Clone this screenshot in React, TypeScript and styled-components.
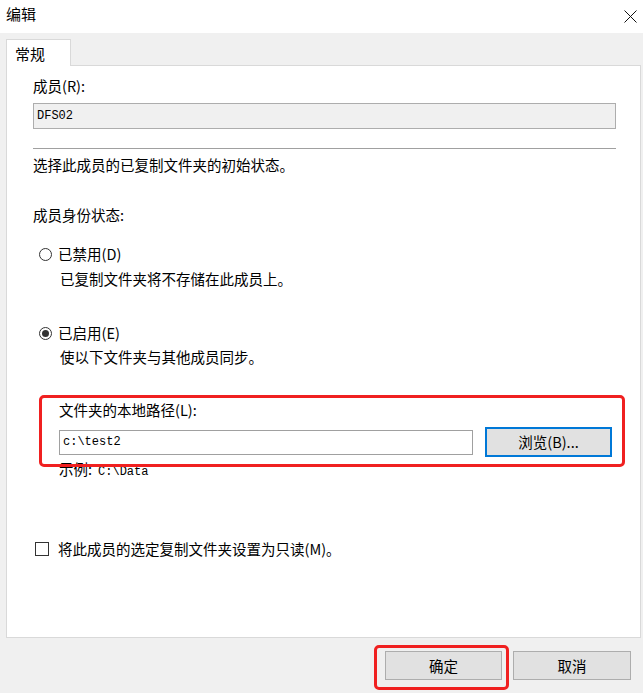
import React from "react";
import styled, { createGlobalStyle } from "styled-components";

const Global = createGlobalStyle`
  html, body { margin: 0; padding: 0; }
  body {
    background: #f0f0f0;
    font-family: "Noto Sans CJK SC", "Liberation Sans", sans-serif;
    color: #000;
  }
`;

const Window = styled.div`
  width: 643px;
  height: 693px;
  display: flex;
  flex-direction: column;
  background: #f0f0f0;
  overflow: hidden;
`;

const TitleBar = styled.div`
  height: 33px;
  flex: none;
  background: #fff;
  display: flex;
  align-items: center;
  justify-content: space-between;
  padding: 0 6px 6px 6px;
  box-sizing: border-box;
`;

const Title = styled.span`
  font-size: 15px;
  line-height: 20px;
`;

const Body = styled.div`
  flex: 1;
  display: flex;
  flex-direction: column;
  padding: 7px 2px 0 6px;
  min-height: 0;
`;

const TabStrip = styled.div`
  height: 26px;
  flex: none;
  display: flex;
  align-items: flex-end;
  margin-bottom: -1px;
  position: relative;
  z-index: 1;
`;

const Tab = styled.div`
  width: 65px;
  height: 27px;
  box-sizing: border-box;
  background: #fff;
  border: 1px solid #d9d9d9;
  border-bottom: none;
  padding-left: 8px;
  font-size: 15px;
  line-height: 27px;
`;

const Panel = styled.div`
  flex: 1;
  background: #fff;
  border: 1px solid #d9d9d9;
  display: flex;
  flex-direction: column;
  padding: 10px 24px 0 26px;
  font-size: 14.5px;
  line-height: 20px;
`;

const Text = styled.div<{ $mt?: number; $indent?: number }>`
  margin-top: ${(p) => p.$mt ?? 0}px;
  padding-left: ${(p) => p.$indent ?? 0}px;
  white-space: nowrap;
`;

const Mono = styled.span`
  font-family: "Liberation Mono", monospace;
  font-size: 12px;
  margin-left: 6px;
`;

const ReadOnlyField = styled.div`
  margin-top: 7px;
  height: 26px;
  box-sizing: border-box;
  background: #f0f0f0;
  border: 1px solid #adadad;
  display: flex;
  align-items: center;
  padding-left: 3px;
  font-family: "Liberation Mono", monospace;
  font-size: 12px;
`;

const Separator = styled.div`
  margin-top: 19px;
  height: 1px;
  background: #a0a0a0;
`;

const OptionRow = styled.div<{ $mt: number }>`
  margin-top: ${(p) => p.$mt}px;
  display: flex;
  align-items: center;
  height: 20px;
  white-space: nowrap;
`;

const Radio = styled.span<{ $checked?: boolean }>`
  width: 13px;
  height: 13px;
  margin-left: 6px;
  margin-right: 6px;
  border: 1px solid #333;
  border-radius: 50%;
  box-sizing: border-box;
  display: flex;
  align-items: center;
  justify-content: center;
  &::after {
    content: "";
    display: ${(p) => (p.$checked ? "block" : "none")};
    width: 7px;
    height: 7px;
    border-radius: 50%;
    background: #333;
  }
`;

const Checkbox = styled.span`
  width: 14px;
  height: 14px;
  box-sizing: border-box;
  border: 1px solid #333;
  margin-left: 2px;
  margin-right: 9px;
`;

const Group = styled.div`
  position: relative;
  margin-top: 33px;
  padding-left: 26px;
  display: flex;
  flex-direction: column;
`;

const Highlight = styled.div<{ $l: number; $t: number; $w: number; $h: number }>`
  position: absolute;
  left: ${(p) => p.$l}px;
  top: ${(p) => p.$t}px;
  width: ${(p) => p.$w}px;
  height: ${(p) => p.$h}px;
  box-sizing: border-box;
  border: 3px solid #f02020;
  border-radius: 5px;
  pointer-events: none;
`;

const PathRow = styled.div`
  margin-top: 7px;
  display: flex;
  align-items: center;
  height: 30px;
  gap: 12px;
`;

const PathInput = styled.div`
  width: 414px;
  height: 25px;
  box-sizing: border-box;
  border: 1px solid #a0a0a0;
  background: #fff;
  display: flex;
  align-items: center;
  padding-left: 3px;
  font-family: "Liberation Mono", monospace;
  font-size: 12px;
`;

const Button = styled.div<{ $focused?: boolean; $w: number; $h: number }>`
  position: relative;
  width: ${(p) => p.$w}px;
  height: ${(p) => p.$h}px;
  box-sizing: border-box;
  background: #e1e1e1;
  border: ${(p) => (p.$focused ? "2px solid #0078d7" : "1px solid #adadad")};
  display: flex;
  align-items: center;
  justify-content: center;
  font-size: 14.5px;
  white-space: nowrap;
`;

const Footer = styled.div`
  height: 55px;
  flex: none;
  display: flex;
  justify-content: flex-end;
  align-items: flex-start;
  padding: 13px 10px 0 0;
  box-sizing: border-box;
  gap: 11px;
`;

const CloseIcon = () => (
  <svg width="13" height="13" viewBox="0 0 13 13" style={{ marginTop: 6 }}>
    <path d="M0.5 0.5 L12.5 12.5 M12.5 0.5 L0.5 12.5" stroke="#111" strokeWidth="1" />
  </svg>
);

export default function App() {
  return (
    <>
      <Global />
      <Window>
        <TitleBar>
          <Title>编辑</Title>
          <CloseIcon />
        </TitleBar>
        <Body>
          <TabStrip>
            <Tab>常规</Tab>
          </TabStrip>
          <Panel>
            <Text>成员(R):</Text>
            <ReadOnlyField>DFS02</ReadOnlyField>
            <Separator />
            <Text $mt={6}>选择此成员的已复制文件夹的初始状态。</Text>
            <Text $mt={30}>成员身份状态:</Text>
            <OptionRow $mt={19}>
              <Radio />
              已禁用(D)
            </OptionRow>
            <Text $mt={5} $indent={27}>已复制文件夹将不存储在此成员上。</Text>
            <OptionRow $mt={34}>
              <Radio $checked />
              已启用(E)
            </OptionRow>
            <Text $mt={4} $indent={27}>使以下文件夹与其他成员同步。</Text>
            <Group>
              <Text>文件夹的本地路径(L):</Text>
              <PathRow>
                <PathInput>c:\test2</PathInput>
                <Button $focused $w={127} $h={30}>浏览(B)...</Button>
              </PathRow>
              <Text $mt={2}>
                示例:<Mono>C:\Data</Mono>
              </Text>
              <Highlight $l={6} $t={-5} $w={586} $h={72} />
            </Group>
            <OptionRow $mt={57}>
              <Checkbox />
              将此成员的选定复制文件夹设置为只读(M)。
            </OptionRow>
          </Panel>
          <Footer>
            <Button $w={117} $h={29}>
              确定
              <Highlight $l={-12} $t={-7} $w={135} $h={45} />
            </Button>
            <Button $w={118} $h={29}>取消</Button>
          </Footer>
        </Body>
      </Window>
    </>
  );
}
